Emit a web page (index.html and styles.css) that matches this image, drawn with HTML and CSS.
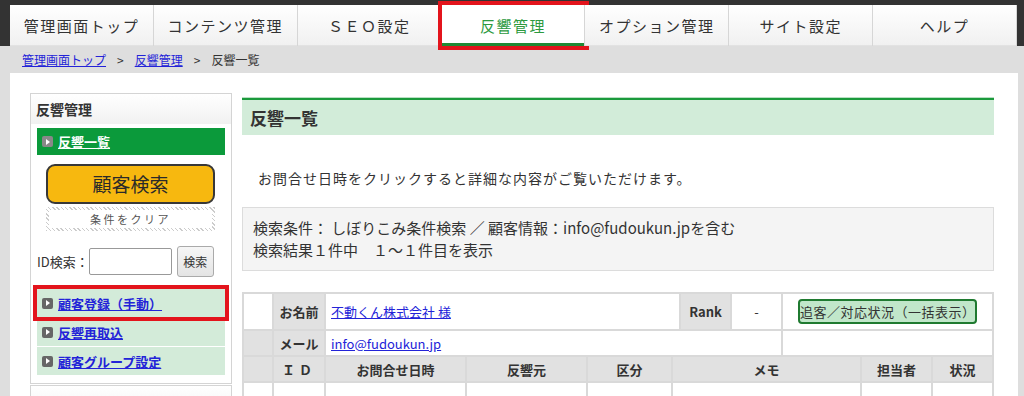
FILE: index.html
```html
<!DOCTYPE html>
<html lang="ja">
  <head>
    <meta charset="utf-8" />
    <title>反響一覧</title>
    <link rel="stylesheet" href="styles.css">
  </head>
  <body>
    <header class="gnav">
      <ul class="gnav-list">
        <li><a href="#">管理画面トップ</a></li>
        <li><a href="#">コンテンツ管理</a></li>
        <li><a href="#">ＳＥＯ設定</a></li>
        <li class="is-active"><a href="#">反響管理</a></li>
        <li><a href="#">オプション管理</a></li>
        <li><a href="#">サイト設定</a></li>
        <li><a href="#">ヘルプ</a></li>
      </ul>
    </header>

    <div class="crumbs">
      <a href="#">管理画面トップ</a><span class="sep">&gt;</span><a href="#">反響管理</a><span class="sep">&gt;</span>反響一覧
    </div>

    <div class="page">
      <aside class="side">
        <div class="side-box">
          <h2 class="side-title">反響管理</h2>
          <a class="side-current" href="#"><span class="arrow"></span>反響一覧</a>
          <a class="btn-search" href="#">顧客検索</a>
          <a class="btn-clear" href="#">条件をクリア</a>
          <form class="id-search">
            <label>ID検索：</label>
            <input type="text">
            <button type="button">検索</button>
          </form>
          <ul class="side-menu">
            <li class="is-marked"><a href="#"><span class="arrow"></span>顧客登録（手動）</a></li>
            <li><a href="#"><span class="arrow"></span>反響再取込</a></li>
            <li><a href="#"><span class="arrow"></span>顧客グループ設定</a></li>
          </ul>
        </div>
        <div class="side-box">
          <h2 class="side-title">&nbsp;</h2>
        </div>
      </aside>

      <main class="main">
        <h1 class="main-title">反響一覧</h1>
        <p class="lead">お問合せ日時をクリックすると詳細な内容がご覧いただけます。</p>

        <div class="cond">
          <div>検索条件： しぼりこみ条件検索 ／ 顧客情報：info@fudoukun.jpを含む</div>
          <div>検索結果１件中　１～１件目を表示</div>
        </div>

        <table class="list">
          <colgroup>
            <col style="width:30px"><col style="width:52px"><col style="width:141px">
            <col style="width:121px"><col style="width:85px"><col style="width:8px">
            <col style="width:51px"><col style="width:51px"><col style="width:79px">
            <col style="width:71px"><col style="width:61px">
          </colgroup>
          <tr class="row-name">
            <td></td>
            <th>お名前</th>
            <td colspan="4"><a href="#">不動くん株式会社 様</a></td>
            <th>Rank</th>
            <td class="c">-</td>
            <td colspan="3" class="c"><a class="btn-follow" href="#">追客／対応状況（一括表示）</a></td>
          </tr>
          <tr class="row-mail">
            <th></th>
            <th>メール</th>
            <td colspan="6"><a href="#">info@fudoukun.jp</a></td>
            <td colspan="3"></td>
          </tr>
          <tr class="row-head">
            <th></th>
            <th>ＩＤ</th>
            <th>お問合せ日時</th>
            <th>反響元</th>
            <th>区分</th>
            <th colspan="4">メモ</th>
            <th>担当者</th>
            <th>状況</th>
          </tr>
          <tr class="row-data">
            <td></td>
            <td class="c">1</td>
            <td class="c"><a href="#">2024/05/13 10:22</a></td>
            <td class="c">手動登録</td>
            <td class="c">売却査定</td>
            <td colspan="4"></td>
            <td></td>
            <td class="c"><a href="#">未対応</a></td>
          </tr>
        </table>
      </main>
    </div>
  </body>
</html>
```

FILE: styles.css
```css
html {
  overflow: hidden;
}

body {
  margin: 0;
  background-color: #dedede;
  color: #333;
  font-family: "Noto Sans CJK JP", "Noto Sans", sans-serif;
  font-size: 13px;
}

a {
  color: #2323d8;
}

ul {
  list-style: none;
  margin: 0;
  padding: 0;
}

/* global nav */

.gnav {
  background-color: #333;
  padding: 5px 7px 0 10px;
}

.gnav-list {
  display: flex;
}

.gnav-list li {
  flex: 1;
}

.gnav-list a {
  display: flex;
  align-items: center;
  justify-content: center;
  height: 41px;
  background: linear-gradient(#fff, #f0f0f0);
  border-right: 1px solid #d6d6d6;
  box-shadow: inset 0 -1px #e2e2e2;
  color: #333;
  font-size: 15px;
  letter-spacing: 1.5px;
  text-decoration: none;
}

.gnav-list .is-active a {
  background: #fff;
  color: #2d9a3f;
  box-shadow: inset 0 -3px #1f8a35;
  outline: 4px solid #e3141c;
}

/* breadcrumb */

.crumbs {
  height: 27px;
  line-height: 27px;
  padding-left: 22px;
  font-size: 12px;
}

.crumbs .sep {
  margin: 0 11px;
}

/* page */

.page {
  display: flex;
  gap: 10px;
  margin: 0 6px 0 10px;
  padding: 20px 25px 40px 20px;
  background-color: #fff;
}

.side {
  width: 202px;
  flex-shrink: 0;
}

.side-box {
  border: 1px solid #d4d4d4;
  padding-bottom: 7px;
  margin-bottom: 1px;
}

.side-title {
  margin: 0;
  height: 30px;
  line-height: 30px;
  padding-left: 5px;
  font-size: 14px;
  background: linear-gradient(#fff, #f1f1f1);
}

.arrow {
  display: inline-flex;
  align-items: center;
  justify-content: center;
  width: 11px;
  height: 11px;
  margin-right: 5px;
  border-radius: 2px;
  background-color: #666;
  vertical-align: -1px;
}

.arrow::before {
  content: "";
  border-left: 4px solid #fff;
  border-top: 3px solid transparent;
  border-bottom: 3px solid transparent;
  margin-left: 1px;
}

.side-current {
  display: flex;
  align-items: center;
  height: 27px;
  margin: 4px 6px 0;
  padding-left: 5px;
  background-color: #0b9a3b;
  color: #fff;
  font-weight: bold;
}

.side-current .arrow {
  background-color: #888;
}

.btn-search {
  display: block;
  height: 36px;
  line-height: 36px;
  margin: 9px 16px 0 15px;
  border: 2px solid #383838;
  border-radius: 9px;
  background-color: #f7b80f;
  color: #2a2a2a;
  font-size: 19px;
  text-align: center;
  text-decoration: none;
}

.btn-clear {
  display: block;
  height: 18px;
  line-height: 18px;
  margin: 3px 16px 0 15px;
  border: 3px solid #ddd;
  border-image: repeating-linear-gradient(45deg, #ccc 0 1px, #fff 1px 3px) 3;
  color: #555;
  font-size: 11px;
  letter-spacing: 2.5px;
  text-align: center;
  text-decoration: none;
}

.id-search {
  display: flex;
  align-items: center;
  margin: 15px 0 0 6px;
  font-size: 13px;
}

.id-search input {
  width: 81px;
  height: 25px;
  margin: 0;
  padding: 0;
  border: 1px solid #999;
  border-radius: 2px;
}

.id-search button {
  width: 37px;
  height: 31px;
  margin-left: 5px;
  padding: 0;
  border: 1px solid #aaa;
  border-radius: 3px;
  background: linear-gradient(#f6f6f6, #e4e4e4);
  color: #333;
  font-family: inherit;
  font-size: 12px;
}

.side-menu {
  margin: 12px 6px 0;
}

.side-menu li {
  height: 28px;
  margin-bottom: 1px;
  background-color: #d3ebd9;
}

.side-menu li.is-marked {
  outline: 4px solid #e3141c;
}

.side-menu a {
  display: flex;
  align-items: center;
  height: 100%;
  padding-left: 5px;
  font-weight: bold;
}

/* main */

.main {
  flex: 1;
  padding-top: 5px;
}

.main-title {
  margin: 0;
  height: 35px;
  line-height: 35px;
  padding-left: 8px;
  border-top: 2px solid #1b9a3c;
  box-shadow: 0 -1px #b9dfc3;
  background-color: #d2ecd9;
  font-size: 17px;
}

.lead {
  margin: 33px 0 0;
  padding-left: 16px;
  line-height: 20px;
  font-size: 14px;
  letter-spacing: 1px;
}

.cond {
  margin-top: 19px;
  padding: 9px 10px;
  border: 1px solid #dcdcdc;
  background-color: #f4f4f4;
  font-size: 15px;
  line-height: 22px;
}

.list {
  width: 100%;
  margin-top: 21px;
  table-layout: fixed;
  border-collapse: collapse;
  font-size: 13px;
}

.list td,
.list th {
  border: 2px solid #d9d9d9;
  padding: 0 5px;
  white-space: nowrap;
  overflow: hidden;
}

.list th {
  background-color: #e1e1e1;
  text-align: center;
}

.list .c {
  text-align: center;
}

.row-name td,
.row-name th {
  height: 35px;
}

.row-mail td,
.row-mail th {
  height: 24px;
}

.row-head th {
  height: 24px;
}

.row-data td {
  height: 40px;
}

.row-head th:nth-child(2) {
  letter-spacing: 4px;
}

.btn-follow {
  display: inline-block;
  width: 175px;
  height: 21px;
  line-height: 21px;
  border: 2px solid #1f7a30;
  border-radius: 4px;
  background-color: #c1e7ca;
  color: #333;
  text-decoration: none;
  letter-spacing: 0.5px;
}
```
